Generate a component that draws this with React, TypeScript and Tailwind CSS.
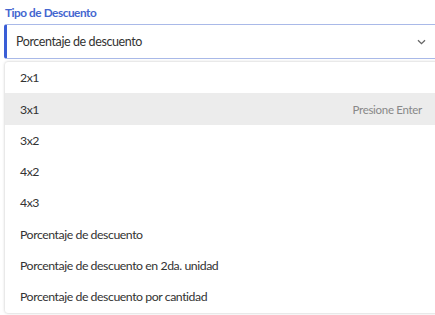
import React from "react";

const items = [
  "2x1",
  "3x1",
  "3x2",
  "4x2",
  "4x3",
  "Porcentaje de descuento",
  "Porcentaje de descuento en 2da. unidad",
  "Porcentaje de descuento por cantidad",
];

export default function App() {
  return (
    <div
      className="w-[435px] h-[315px] bg-white overflow-hidden pl-[4px] pt-[5px]"
      style={{ fontFamily: 'Lato, "Open Sans", sans-serif' }}
    >
      <div className="text-[11.8px] font-bold text-[#4466d0] leading-[16px] h-[19px] pl-[1px] tracking-[-0.45px]">
        Tipo de Descuento
      </div>
      <div className="h-[35px] mr-[-4px] flex items-center justify-between border border-[#a9b9e8] border-l-[3px] border-l-[#3a5ed6] rounded-l-[3px] pl-[9px] pr-[12px] text-[12.5px] tracking-[-0.4px] text-[#333]">
        <span className="pt-[1px]">Porcentaje de descuento</span>
        <svg width="9" height="6" viewBox="0 0 9 6" fill="none">
          <path d="M1 1.2l3.5 3.5 3.5-3.5" stroke="#666" strokeWidth="1.3" />
        </svg>
      </div>
      <div className="mt-[3px] ml-[1px] mr-[-4px] h-[251px] rounded-[3px] bg-white shadow-[0_0_3px_rgba(0,0,0,0.25)] overflow-hidden">
        {items.map((it, i) => (
          <div
            key={it}
            className={
              "h-[31.25px] flex items-center justify-between pl-[15px] pr-[17px] pt-[2px] text-[12.3px] tracking-[-0.45px] text-[#333] " +
              (i === 1 ? "bg-[#ececec]" : "")
            }
          >
            <span>{it}</span>
            {i === 1 && <span className="text-[11.5px] text-[#888] tracking-[-0.3px]">Presione Enter</span>}
          </div>
        ))}
      </div>
    </div>
  );
}
